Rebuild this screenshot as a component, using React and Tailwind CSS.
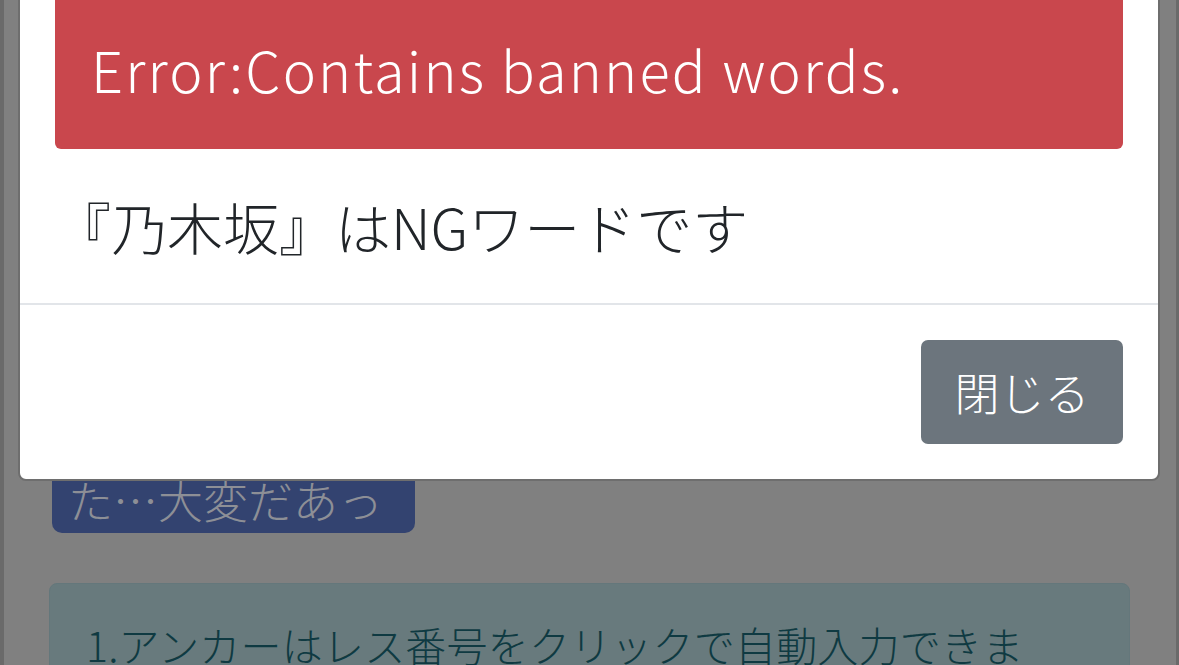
import React from "react";

const jp = { fontFamily: '"Noto Sans CJK JP", "Noto Sans", sans-serif' };

// dimmed page content behind the modal
const PageBehind = () => (
  <div className="flex flex-col">
    <div className="ml-[48px] mt-[380px] h-[153px] w-[363px] rounded-[10px] bg-[#334370] px-[16px] flex items-end">
      <span className="text-[45px] leading-[66px] text-[#8d8f96]">た…大変だあっ</span>
    </div>
    <div className="ml-[45px] mr-[46px] mt-[50px] rounded-[8px] border border-[#64777b] bg-[#687a7d] pl-[36px] pr-[60px] pt-[30px] pb-[30px]">
      <p className="text-[41px] leading-[61px] tracking-[0.2px] text-[#0f3a42]">
        1.アンカーはレス番号をクリックで自動入力できます。
      </p>
    </div>
  </div>
);

const ErrorModal = () => (
  <div className="absolute left-[14px] bottom-[184px] w-[1142px] rounded-[8px] border-2 border-[#6e6e6e] bg-white">
    <div className="p-[35px]">
      <div className="rounded-[6px] bg-[#c9474d] pl-[36px] pt-[200px] pb-[38px]">
        <p className="text-[56px] leading-[84px] tracking-[2.2px] text-white">Error:Contains banned words.</p>
      </div>
      <p className="mt-[35px] text-[56px] leading-[84px] text-[#212529]">『乃木坂』はNGワードです</p>
    </div>
    <div className="flex justify-end border-t-2 border-[#e2e5e9] p-[35px]">
      <button className="flex h-[104px] w-[202px] items-center justify-center rounded-[7px] bg-[#6c757d] text-[45px] text-white">
        閉じる
      </button>
    </div>
  </div>
);

export default function App() {
  return (
    <div
      style={jp}
      className="relative h-[665px] w-[1179px] overflow-hidden border-l-4 border-r-[3px] border-[#6a6a6a] bg-[#808080] font-light"
    >
      <PageBehind />
      <ErrorModal />
    </div>
  );
}
